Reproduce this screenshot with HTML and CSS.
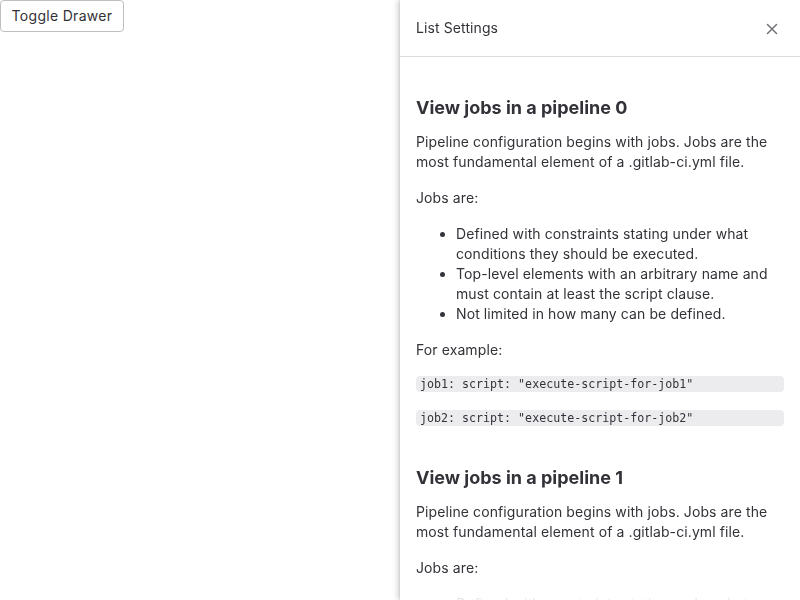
FILE: index.html
```html
<!DOCTYPE html>
<html>
<head>
<meta charset="utf-8">
<link rel="stylesheet" href="styles.css">
</head>
<body>
<button class="toggle">Toggle Drawer</button>
<aside class="drawer">
  <header class="drawer-header">
    <span class="drawer-title">List Settings</span>
    <button class="close" aria-label="Close">
      <svg width="16" height="16" viewBox="0 0 16 16"><path d="M3.5 3.5l9 9M12.5 3.5l-9 9" stroke="#737278" stroke-width="1.5" stroke-linecap="round" fill="none"/></svg>
    </button>
  </header>
  <div class="drawer-body">
    <section class="sec">
      <h2>View jobs in a pipeline 0</h2>
      <p>Pipeline configuration begins with jobs. Jobs are the most fundamental element of a .gitlab-ci.yml file.</p>
      <p>Jobs are:</p>
      <ul>
        <li>Defined with constraints stating under what conditions they should be executed.</li>
        <li>Top-level elements with an arbitrary name and must contain at least the script clause.</li>
        <li>Not limited in how many can be defined.</li>
      </ul>
      <p>For example:</p>
      <code class="code">job1: script: "execute-script-for-job1"</code>
      <code class="code">job2: script: "execute-script-for-job2"</code>
    </section>
    <section class="sec">
      <h2>View jobs in a pipeline 1</h2>
      <p>Pipeline configuration begins with jobs. Jobs are the most fundamental element of a .gitlab-ci.yml file.</p>
      <p>Jobs are:</p>
      <ul>
        <li>Defined with constraints stating under what conditions they should be executed.</li>
        <li>Top-level elements with an arbitrary name and must contain at least the script clause.</li>
        <li>Not limited in how many can be defined.</li>
      </ul>
      <p>For example:</p>
      <code class="code">job1: script: "execute-script-for-job1"</code>
      <code class="code">job2: script: "execute-script-for-job2"</code>
    </section>
  </div>
  <div class="scrim"></div>
</aside>
</body>
</html>
```
FILE: styles.css
```css
html, body {
  margin: 0;
  padding: 0;
  height: 100%;
  overflow: hidden;
}
body {
  font-family: Inter, "Noto Sans", sans-serif;
  font-size: 14px;
  line-height: 20px;
  letter-spacing: 0.1px;
  color: #333238;
  background: #fff;
}
.toggle {
  font-family: inherit;
  font-size: 14px;
  line-height: 20px;
  letter-spacing: 0.3px;
  color: #333238;
  background: #fff;
  border: 1px solid #bfbfc3;
  border-radius: 4px;
  height: 32px;
  width: 124px;
  padding: 0 8px;
  margin: 0;
  display: block;
}
.drawer {
  position: fixed;
  top: 0;
  right: 0;
  width: 400px;
  height: 100%;
  background: #fff;
  box-shadow: -2px 0 6px rgba(0,0,0,0.18), -1px 0 2px rgba(0,0,0,0.08);
  display: flex;
  flex-direction: column;
  overflow: hidden;
}
.drawer-header {
  height: 57px;
  box-sizing: border-box;
  border-bottom: 1px solid #dcdcde;
  display: flex;
  align-items: center;
  justify-content: space-between;
  padding: 0 16px;
  flex-shrink: 0;
}
.drawer-title {
  font-size: 14px;
  color: #333238;
}
.close {
  border: 0;
  background: none;
  padding: 0;
  width: 16px;
  height: 16px;
  margin-right: 4px;
  margin-top: 1px;
  display: flex;
}
.drawer-body {
  padding: 16px;
  overflow: hidden;
  flex: 1;
}
.sec {
  display: flow-root;
}
.sec h2 {
  font-size: 18px;
  line-height: 24px;
  font-weight: 700;
  letter-spacing: 0;
  margin: 23px 0 12px;
  color: #333238;
}
.sec p {
  margin: 0 0 16px;
}
.sec ul {
  margin: 0 0 16px;
  padding-left: 40px;
}
.code {
  display: block;
  font-family: "DejaVu Sans Mono", "Liberation Mono", monospace;
  font-size: 11.65px;
  letter-spacing: 0;
  line-height: 16px;
  background: #ececef;
  border-radius: 4px;
  padding: 0 4px;
  margin-bottom: 18px;
  color: #333238;
}
.code:last-child {
  margin-bottom: 17px;
}
.scrim {
  position: absolute;
  left: 0;
  right: 0;
  bottom: 0;
  height: 24px;
  background: linear-gradient(rgba(255,255,255,0.3), rgba(255,255,255,0.9));
}
```
